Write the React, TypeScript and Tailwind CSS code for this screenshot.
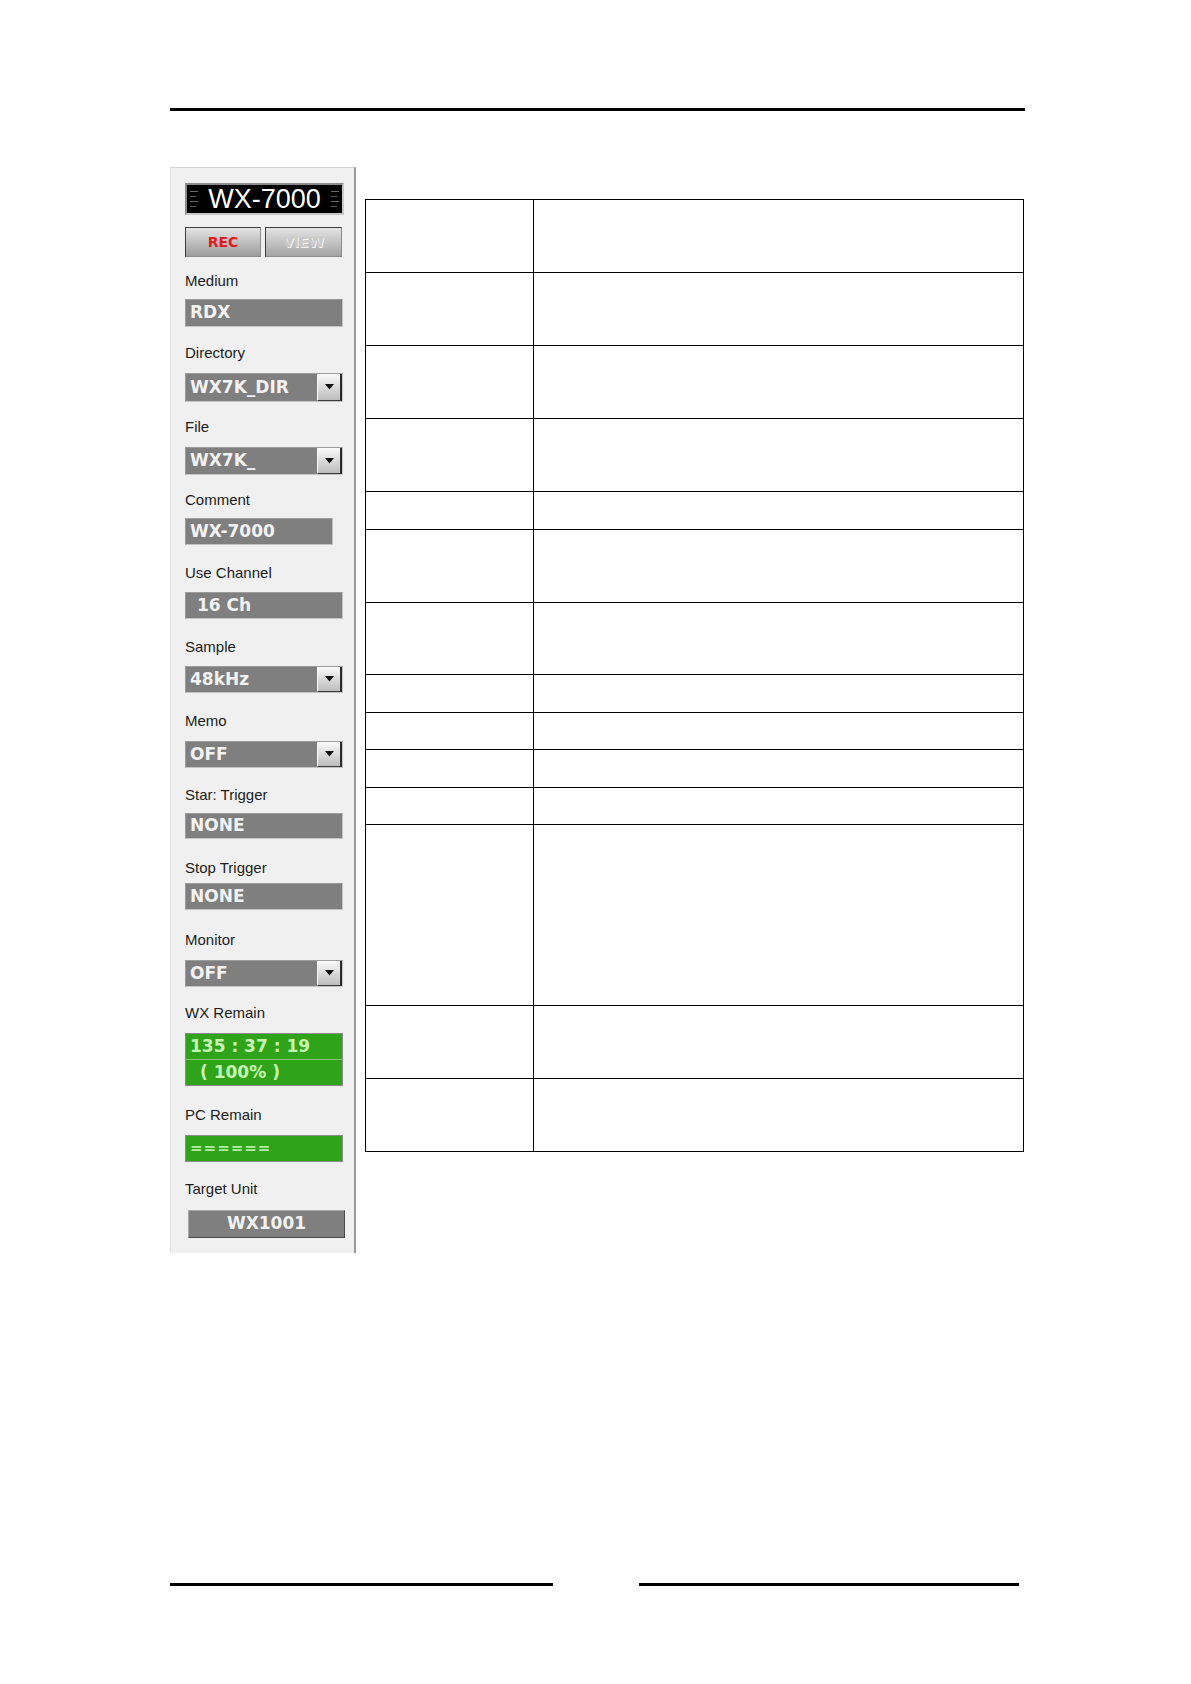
import type { ReactNode } from "react";

const label = "font-['Liberation_Sans',Arial,sans-serif] text-[15px] leading-[20px] h-[20px] text-[#1c1c1c]";
const boxText = "font-['DejaVu_Sans',Verdana,sans-serif] font-bold text-[17px] text-[#f2f2f2]";

function DropButton() {
  return (
    <div className="flex h-full w-[25px] items-center justify-center border-l border-l-[#f8f8f8] border-r-2 border-r-[#2a2a2a] border-b border-b-[#3a3a3a] bg-gradient-to-b from-[#fbfbfb] to-[#bdbdbd]">
      <svg width="9" height="6" viewBox="0 0 9 6">
        <path d="M0 0h9L4.5 5.5z" fill="#111" />
      </svg>
    </div>
  );
}

function Box({
  children,
  drop,
  className,
}: {
  children: ReactNode;
  drop?: boolean;
  className: string;
}) {
  return (
    <div
      className={`flex items-center border border-t-[#9c9c9c] border-l-[#9c9c9c] border-r-[#c4c4c4] border-b-[#c4c4c4] bg-[#7f7f7f] ${className}`}
    >
      <div className={`flex-1 pl-[4px] ${boxText}`}>{children}</div>
      {drop ? <DropButton /> : null}
    </div>
  );
}

function Ticks() {
  return (
    <div className="flex flex-col gap-[4px]">
      <div className="h-[1px] w-[8px] bg-[#6a6a6a]" />
      <div className="h-[1px] w-[6px] bg-[#555]" />
      <div className="h-[1px] w-[8px] bg-[#6a6a6a]" />
      <div className="h-[1px] w-[6px] bg-[#555]" />
    </div>
  );
}

function Panel() {
  return (
    <div className="flex h-[1086px] w-[186px] flex-col border-t border-t-[#cfcfcf] border-l border-l-[#e0e0e0] border-r-2 border-r-[#9a9a9a] bg-[#f0f0f0] pl-[14px] pt-[15px]">
      <div className="flex h-[32px] w-[159px] items-center justify-between border-2 border-t-[#8a8a8a] border-l-[#8a8a8a] border-r-[#c8c8c8] border-b-[#c8c8c8] bg-black px-[3px]">
        <Ticks />
        <span className="font-['Liberation_Sans',Arial,sans-serif] text-[27px] leading-none text-white">WX-7000</span>
        <Ticks />
      </div>

      <div className="mt-[12px] flex h-[30px] w-[158px] gap-[4px]">
        <div className="flex w-[76px] items-center justify-center border border-t-[#3c3c3c] border-l-[#3c3c3c] border-r-[#8c8c8c] border-b-[#8c8c8c] bg-gradient-to-b from-[#e4e4e4] to-[#9d9d9d]">
          <span className="font-['DejaVu_Sans',Verdana,sans-serif] text-[14px] font-bold text-[#e41a1a]">REC</span>
        </div>
        <div className="flex w-[77px] items-center justify-center border border-t-[#3c3c3c] border-l-[#3c3c3c] border-r-[#8c8c8c] border-b-[#8c8c8c] bg-gradient-to-b from-[#e4e4e4] to-[#a4a4a4]">
          <span className="font-['DejaVu_Sans',Verdana,sans-serif] text-[14px] font-bold text-[#c9c9c9] [text-shadow:1px_1px_0_#f4f4f4]">VIEW</span>
        </div>
      </div>

      <div className={`mt-[14px] ${label}`}>Medium</div>
      <Box className="mt-[8px] h-[28px] w-[158px]">RDX</Box>

      <div className={`mt-[16px] ${label}`}>Directory</div>
      <Box drop className="mt-[10px] h-[29px] w-[158px]">WX7K_DIR</Box>

      <div className={`mt-[15px] ${label}`}>File</div>
      <Box drop className="mt-[10px] h-[28px] w-[158px]">WX7K_</Box>

      <div className={`mt-[15px] ${label}`}>Comment</div>
      <Box className="mt-[8px] h-[27px] w-[148px]">WX-7000</Box>

      <div className={`mt-[18px] ${label}`}>Use Channel</div>
      <Box className="mt-[9px] h-[27px] w-[158px]">
        <span className="pl-[7px]">16 Ch</span>
      </Box>

      <div className={`mt-[18px] ${label}`}>Sample</div>
      <Box drop className="mt-[9px] h-[27px] w-[158px]">48kHz</Box>

      <div className={`mt-[18px] ${label}`}>Memo</div>
      <Box drop className="mt-[10px] h-[27px] w-[158px]">OFF</Box>

      <div className={`mt-[17px] ${label}`}>Star: Trigger</div>
      <Box className="mt-[8px] h-[26px] w-[158px]">NONE</Box>

      <div className={`mt-[19px] ${label}`}>Stop Trigger</div>
      <Box className="mt-[5px] h-[27px] w-[158px]">NONE</Box>

      <div className={`mt-[20px] ${label}`}>Monitor</div>
      <Box drop className="mt-[10px] h-[27px] w-[158px]">OFF</Box>

      <div className={`mt-[16px] ${label}`}>WX Remain</div>
      <div className="mt-[10px] flex h-[53px] w-[158px] flex-col border border-[#8a8a8a] bg-[#2fa41b]">
        <div className="flex h-[26px] items-center border-b border-b-[#86c47a] pl-[4px] font-['DejaVu_Sans',Verdana,sans-serif] text-[17px] font-bold text-[#c8f5b4]">
          135 : 37 : 19
        </div>
        <div className="flex flex-1 items-center pl-[14px] font-['DejaVu_Sans',Verdana,sans-serif] text-[17px] font-bold text-[#c8f5b4]">
          ( 100% )
        </div>
      </div>

      <div className={`mt-[19px] ${label}`}>PC Remain</div>
      <div className="mt-[10px] flex h-[27px] w-[158px] items-center border border-[#8a8a8a] bg-[#2fa41b] pl-[4px] font-['DejaVu_Sans',Verdana,sans-serif] text-[15px] font-bold tracking-[1px] text-[#b6eda0]">
        ======
      </div>

      <div className={`mt-[17px] ${label}`}>Target Unit</div>
      <div className="ml-[3px] mt-[11px] flex h-[28px] w-[157px] items-center justify-center border border-t-[#a8a8a8] border-l-[#a8a8a8] border-r-[#4a4a4a] border-b-[#4a4a4a] bg-[#7f7f7f]">
        <span className={boxText}>WX1001</span>
      </div>
    </div>
  );
}

const rows = [73, 73, 73, 73, 38, 73, 72, 38, 37, 38, 37, 181, 73, 73];

function SpecTable() {
  return (
    <div className="mt-[32px] ml-[9px] flex w-[659px] flex-col border-t border-x border-black">
      {rows.map((h, i) => (
        <div key={i} className="flex border-b border-black" style={{ height: h }}>
          <div className="w-[168px] border-r border-black" />
          <div className="flex-1" />
        </div>
      ))}
    </div>
  );
}

export default function App() {
  return (
    <div className="h-[1684px] w-[1191px] bg-white pl-[170px] pt-[108px]">
      <div className="h-[3px] w-[855px] bg-black" />
      <div className="mt-[56px] flex items-start">
        <Panel />
        <SpecTable />
      </div>
      <div className="mt-[330px] flex gap-[86px]">
        <div className="h-[3px] w-[383px] bg-black" />
        <div className="h-[3px] w-[380px] bg-black" />
      </div>
    </div>
  );
}
